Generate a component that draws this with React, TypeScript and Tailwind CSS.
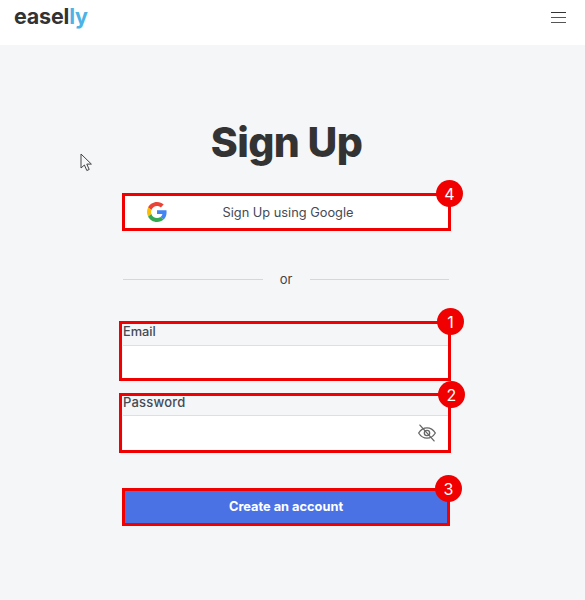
import React from "react";

function Badge({ n, className }: { n: number; className: string }) {
  return (
    <span className={"absolute z-10 flex h-[27px] w-[27px] items-center justify-center rounded-full bg-[#f00000] text-[16px] text-white " + className}>
      {n}
    </span>
  );
}

function Google() {
  return (
    <svg width="20" height="20" viewBox="0 0 48 48">
      <path fill="#EA4335" d="M24 9.5c3.54 0 6.71 1.22 9.21 3.6l6.85-6.85C35.9 2.38 30.47 0 24 0 14.62 0 6.51 5.38 2.56 13.22l7.98 6.19C12.43 13.72 17.74 9.5 24 9.5z" />
      <path fill="#4285F4" d="M46.98 24.55c0-1.57-.15-3.09-.38-4.55H24v9.02h12.94c-.58 2.96-2.26 5.48-4.78 7.18l7.73 6c4.51-4.18 7.09-10.36 7.09-17.65z" />
      <path fill="#FBBC05" d="M10.53 28.59c-.48-1.45-.76-2.99-.76-4.59s.27-3.14.76-4.59l-7.98-6.19C.92 16.46 0 20.12 0 24c0 3.88.92 7.54 2.56 10.78l7.97-6.19z" />
      <path fill="#34A853" d="M24 48c6.48 0 11.93-2.13 15.89-5.81l-7.73-6c-2.15 1.45-4.92 2.3-8.16 2.3-6.26 0-11.57-4.22-13.47-9.91l-7.98 6.19C6.51 42.62 14.62 48 24 48z" />
    </svg>
  );
}

export default function App() {
  return (
    <div className="relative h-[600px] w-[585px] overflow-hidden bg-[#f4f6f8] font-['Inter',sans-serif] text-[#333333]">
      <header className="flex h-[45px] items-start justify-between bg-white pl-[14px] pr-[19px]">
        <div className="mt-[2px] text-[21.5px] font-bold leading-[28px] tracking-[-0.2px]">
          easel<span className="text-[#4db2e6]">ly</span>
        </div>
        <div className="mt-[12px] flex w-[15px] flex-col gap-[4px]">
          <span className="h-[1px] bg-[#333333]" />
          <span className="h-[1px] bg-[#555555]" />
          <span className="h-[1px] bg-[#555555]" />
        </div>
      </header>

      <svg className="absolute left-[80px] top-[153px]" width="14" height="19" viewBox="0 0 14 19">
        <path d="M1 1v14l3.4-3 2.4 5.5 2.400-1-2.400-5.400h4.600z" fill="#f4f6f8" stroke="#444444" strokeWidth="1" />
      </svg>

      <main className="ml-[122px] flex w-[329px] flex-col">
        <h1 className="mt-[72px] text-center text-[41px] font-extrabold leading-[50px] tracking-[-0.6px] text-[#333333]">Sign Up</h1>

        <div className="relative mt-[26px] flex h-[38px] items-center border-[3px] border-[#f00000] bg-white pl-[22px]">
          <Google />
          <span className="flex-1 translate-y-[1px] pr-[39px] text-center text-[12.8px] text-[#444a55]">Sign Up using Google</span>
          <Badge n={4} className="right-[-15px] top-[-16px]" />
        </div>

        <div className="ml-[1px] mr-[2px] mt-[40px] flex items-center">
          <span className="h-[1px] flex-1 bg-[#d6d7d9]" />
          <span className="w-[47px] text-center text-[13px] leading-[16px] text-[#444444]">or</span>
          <span className="h-[1px] flex-1 bg-[#d6d7d9]" />
        </div>

        <div className="relative ml-[-3px] mt-[34px] h-[60px] border-[3px] border-[#f00000] pl-[1px]">
          <label className="block text-[12.8px] font-medium leading-[16px] text-[#444a55]">Email</label>
          <div className="mt-[5px] h-[33px] border-t border-[#dedfe2] bg-white" />
          <Badge n={1} className="right-[-16px] top-[-16px]" />
        </div>

        <div className="relative ml-[-3px] mt-[12px] h-[60px] border-[3px] border-[#f00000] pl-[1px]">
          <label className="block text-[13px] font-medium leading-[13px] tracking-[0.2px] text-[#444a55]">Password</label>
          <div className="mt-[6px] flex h-[35px] items-center justify-end border-t border-[#dedfe2] bg-white pr-[11px]">
            <svg width="20" height="20" viewBox="0 0 24 24" fill="none" stroke="#666666" strokeWidth="1.6" strokeLinecap="round" strokeLinejoin="round">
              <path d="M2 12c2.500-4 6-6.200 10-6.200S19.500 8 22 12c-2.500 4-6 6.200-10 6.200S4.500 16 2 12z" />
              <circle cx="12" cy="12" r="3.200" />
              <path d="M3.500 2.500l17 19" />
            </svg>
          </div>
          <Badge n={2} className="right-[-17px] top-[-15px]" />
        </div>

        <button className="relative mr-[1px] mt-[35px] h-[38px] border-[3px] border-[#f00000] bg-[#4a72e4] text-[12.8px] font-bold text-white">
          Create an account
          <Badge n={3} className="right-[-15px] top-[-16px] font-normal" />
        </button>
      </main>
    </div>
  );
}
